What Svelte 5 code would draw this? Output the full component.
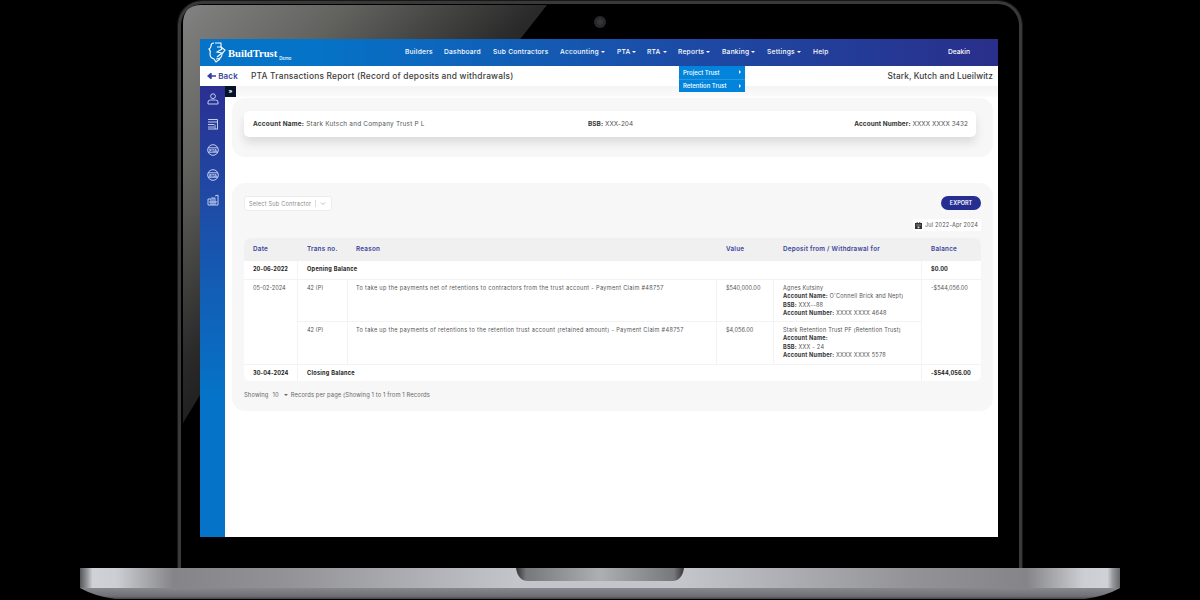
<script lang="ts">
	const nav = [
		{ label: 'Builders' },
		{ label: 'Dashboard' },
		{ label: 'Sub Contractors' },
		{ label: 'Accounting', menu: true },
		{ label: 'PTA', menu: true },
		{ label: 'RTA', menu: true },
		{ label: 'Reports', menu: true, items: ['Project Trust', 'Retention Trust'] },
		{ label: 'Banking', menu: true },
		{ label: 'Settings', menu: true },
		{ label: 'Help' }
	]

	const rows = [
		{
			trans: '42 (P)',
			reason:
				'To take up the payments net of retentions to contractors from the trust account - Payment Claim #48757',
			value: '$540,000.00',
			name: 'Agnes Kutsiny',
			account: "O'Connell Brick and Nept)",
			bsb: 'XXX--88',
			number: 'XXXX XXXX 4648'
		},
		{
			trans: '42 (P)',
			reason:
				'To take up the payments of retentions to the retention trust account (retained amount) - Payment Claim #48757',
			value: '$4,056.00',
			name: 'Stark Retention Trust PF (Retention Trust)',
			account: '',
			bsb: 'XXX - 24',
			number: 'XXXX XXXX 5578'
		}
	]
</script>

<div class="laptop">
	<div class="lid">
		<svg class="glare" viewBox="0 0 846 568">
			<defs>
				<linearGradient id="glare" x1="0" y1="0" x2="0.65" y2="0.75">
					<stop offset="0" stop-color="#828282" />
					<stop offset="0.3" stop-color="#62625f" />
					<stop offset="0.65" stop-color="#2a2a2a" />
					<stop offset="1" stop-color="#0c0c0c" />
				</linearGradient>
			</defs>
			<path d="M6 24 Q6 5 24 5 H370 L344 38 L23 395 L6 423 Z" fill="url(#glare)" />
			<circle cx="423" cy="22" r="6" fill="#29292b" />
			<circle cx="423" cy="22" r="3" fill="#353538" />
		</svg>

		<div class="screen">
			<header class="topbar">
				<div class="brand">
					<svg class="shield" viewBox="0 0 18 22">
						<path d="M6 1 Q3 1 3 4 Q3 6 1 7 Q3 9 2 12 Q2 16 6 17 L8 20 L12 17" />
						<path d="M7 1 H13 V5 L17 8 L14 12 Q14 17 8 17" />
						<path d="M9 5 L13 5 L14 7 L9 10 L14 11 L9 15" />
					</svg>
					<span class="name">BuildTrust</span>
					<span class="demo">Demo</span>
				</div>
				<nav>
					{#each nav as item}
						<div class="item">
							{item.label}{#if item.menu}<i class="caret"></i>{/if}
							{#if item.items}
								<div class="dropdown">
									{#each item.items as sub}
										<div><span>{sub}</span><i class="side"></i></div>
									{/each}
								</div>
							{/if}
						</div>
					{/each}
				</nav>
				<span class="user">Deakin</span>
			</header>

			<div class="titlebar">
				<span class="back">
					<svg viewBox="0 0 9 6"><path d="M9 3 H3 M4 0.5 L1 3 L4 5.5 Z" /></svg>
					Back
				</span>
				<h1>PTA Transactions Report (Record of deposits and withdrawals)</h1>
				<span class="company">Stark, Kutch and Lueilwitz</span>
			</div>

			<div class="body">
				<aside>
					<svg viewBox="0 0 12 12">
						<circle cx="6" cy="3.2" r="2.4" />
						<path d="M1 11 V9 Q1 7 3.5 7 H8.5 Q11 7 11 9 V11 Z" />
					</svg>
					<svg viewBox="0 0 12 12">
						<path d="M1 1.5 H10.5 V11 M1 4 H10 M1 6.5 H7 M1 9 H7 M1 11 H11 M8 6.5 V11" />
					</svg>
					<svg viewBox="0 0 12 12">
						<circle cx="6" cy="6" r="5.3" />
						<path d="M1 3.8 H11 M1 8.2 H11" />
						<text x="6" y="7.6">PTA</text>
					</svg>
					<svg viewBox="0 0 12 12">
						<circle cx="6" cy="6" r="5.3" />
						<path d="M1 3.8 H11 M1 8.2 H11" />
						<text x="6" y="7.6">RTA</text>
					</svg>
					<svg viewBox="0 0 12 12">
						<path d="M1 11 V5 H4 V11 M4 4 H8 V11 M8 2 L11 1 V11 M1 11 H11 M2 8 H10 M6 4 V11" />
					</svg>
					<b class="toggle">»</b>
				</aside>

				<main>
					<section class="account">
						<div class="summary">
							<span class="holder"><b>Account Name:</b> Stark Kutsch and Company Trust P L</span>
							<span><b>BSB:</b> XXX-204</span>
							<span><b>Account Number:</b> XXXX XXXX 3432</span>
						</div>
					</section>

					<section class="report">
						<div class="tools">
							<div class="select">
								<span>Select Sub Contractor</span>
								<svg viewBox="0 0 6 4"><path d="M1 1 L3 3 L5 1" /></svg>
							</div>
							<button>EXPORT</button>
						</div>
						<div class="period">
							<div class="date">
								<svg viewBox="0 0 8 8">
									<path d="M2 0 H3 V1 H5 V0 H6 V1 H8 V8 H0 V1 H2 Z" />
									<path class="hole" d="M1.2 3 H6.8 V3.6 H1.2 Z M3 5 H5 V7 H3 Z" />
								</svg>
								Jul 2022-Apr 2024
							</div>
						</div>

						<div class="table">
							<div class="row head">
								<span>Date</span>
								<span>Trans no.</span>
								<span class="reason">Reason</span>
								<span>Value</span>
								<span>Deposit from / Withdrawal for</span>
								<span>Balance</span>
							</div>
							<div class="row total">
								<span>20-06-2022</span>
								<span class="wide">Opening Balance</span>
								<span>$0.00</span>
							</div>
							{#each rows as row, i}
								<div class="row entry" class:first={i === 0}>
									<span>{i === 0 ? '05-02-2024' : ''}</span>
									<span>{row.trans}</span>
									<span class="reason">{row.reason}</span>
									<span>{row.value}</span>
									<div class="party">
										<p>{row.name}</p>
										<p><b>Account Name:</b> {row.account}</p>
										<p><b>BSB:</b> {row.bsb}</p>
										<p><b>Account Number:</b> {row.number}</p>
									</div>
									<span>{i === 0 ? '-$544,056.00' : ''}</span>
								</div>
							{/each}
							<div class="row total closing">
								<span>30-04-2024</span>
								<span class="wide">Closing Balance</span>
								<span>-$544,056.00</span>
							</div>
						</div>

						<footer>
							<span>Showing</span><span class="count">10</span><i class="caret"></i>
							<span>Records per page (Showing 1 to 1 from 1 Records</span>
						</footer>
					</section>
				</main>
			</div>
		</div>
	</div>

	<svg class="base" viewBox="0 0 1040 32">
		<defs>
			<linearGradient id="metal">
				<stop offset="0" stop-color="#55565a" />
				<stop offset="0.007" stop-color="#97989c" />
				<stop offset="0.012" stop-color="#d0d1d6" />
				<stop offset="0.035" stop-color="#cdced3" />
				<stop offset="0.09" stop-color="#858589" />
				<stop offset="0.2" stop-color="#929297" />
				<stop offset="0.42" stop-color="#c4c5ca" />
				<stop offset="0.58" stop-color="#c4c5ca" />
				<stop offset="0.8" stop-color="#929297" />
				<stop offset="0.91" stop-color="#858589" />
				<stop offset="0.965" stop-color="#cdced3" />
				<stop offset="0.988" stop-color="#d0d1d6" />
				<stop offset="0.993" stop-color="#97989c" />
				<stop offset="1" stop-color="#66676b" />
			</linearGradient>
			<linearGradient id="under" x2="0" y2="1">
				<stop offset="0" stop-color="#87888d" />
				<stop offset="0.75" stop-color="#6f7075" />
				<stop offset="1" stop-color="#434348" />
			</linearGradient>
			<linearGradient id="notch">
				<stop offset="0" stop-color="#333" />
				<stop offset="0.06" stop-color="#77787b" />
				<stop offset="0.5" stop-color="#aeafb3" />
				<stop offset="0.94" stop-color="#77787b" />
				<stop offset="1" stop-color="#333" />
			</linearGradient>
		</defs>
		<path d="M0 20 H1040 Q1026 28 1005 31 H35 Q14 28 0 20 Z" fill="url(#under)" />
		<rect width="1040" height="20" fill="url(#metal)" />
		<path d="M436 0 H604 Q602 13 592 13 H448 Q438 13 436 0 Z" fill="url(#notch)" />
	</svg>
</div>

<style>
	:global(body) {
		background: #000;
	}

	.laptop {
		height: 600px;
		overflow: hidden;
		font-family: Inter, 'Open Sans', sans-serif;
		font-size: 5.6px;
		color: #555;
		white-space: nowrap;
	}

	.lid {
		position: relative;
		box-sizing: border-box;
		width: 844px;
		height: 567px;
		margin: 1px 0 0 178px;
		padding: 35px 0 0 19px;
		border: 3px solid #393939;
		border-bottom: 0;
		border-radius: 24px 24px 0 0;
		box-shadow: 0 0 0 1px #181818;
	}

	.glare {
		position: absolute;
		top: -4px;
		left: -4px;
		width: 846px;
		height: 568px;
	}

	.screen {
		position: relative;
		display: flex;
		flex-direction: column;
		width: 798px;
		height: 498px;
		background: #fff;
	}

	.topbar {
		display: flex;
		align-items: center;
		height: 27px;
		color: #fff;
		background: linear-gradient(90deg, #0573c7 15%, #1c4ba6 60%, #292f8b);
		font-size: 6.7px;
		font-weight: 500;
	}

	.brand {
		display: flex;
		align-items: center;
		width: 197px;
		padding-left: 8px;
	}

	.shield {
		width: 18px;
		height: 22px;
		fill: none;
		stroke: #fff;
		stroke-width: 1.1;
	}

	.name {
		margin: 2px 0 0 2px;
		font: bold 10.6px 'Liberation Serif', serif;
	}

	.demo {
		margin: 12px 0 0 2px;
		font-size: 4.3px;
	}

	nav {
		display: grid;
		grid-template-columns: 39px 49px 67px 57px 30px 31px 44px 45px 46px 135px;
		margin-bottom: 2px;
		letter-spacing: 0.22px;
	}

	.user {
		margin-bottom: 1px;
	}

	.item {
		position: relative;
	}

	.caret {
		display: inline-block;
		margin: 0 0 1px 2px;
		border: 2px solid transparent;
		border-top: 2.5px solid;
		border-bottom: 0;
	}

	.dropdown {
		position: absolute;
		z-index: 1;
		top: 18px;
		left: 1px;
		width: 66px;
		height: 26px;
		background: #0384dc;
		font-size: 6px;
		letter-spacing: 0;
	}

	.dropdown div {
		display: flex;
		justify-content: space-between;
		align-items: center;
		height: 13px;
		padding: 0 4px;
	}

	.dropdown div + div {
		border-top: 1px solid #2997e2;
		height: 12px;
	}

	.side {
		border: 2px solid transparent;
		border-left: 2px solid;
		border-right: 0;
	}

	.titlebar {
		display: flex;
		align-items: center;
		height: 20px;
		padding: 0 5px 0 7px;
		font-size: 8px;
		color: #3c3c3c;
	}

	.back {
		width: 44px;
		color: #3a46a0;
		font-weight: 600;
		letter-spacing: 0.15px;
	}

	.back svg {
		width: 9px;
		height: 6px;
		fill: #3340a0;
		stroke: #3340a0;
		stroke-width: 1.4;
	}

	h1 {
		margin: 0;
		font-size: 8.4px;
		font-weight: 500;
		letter-spacing: 0.2px;
	}

	.company {
		margin-left: auto;
		font-size: 8.3px;
		font-weight: 500;
		letter-spacing: 0.1px;
	}

	.body {
		display: flex;
		height: 451px;
	}

	aside {
		position: relative;
		display: flex;
		flex-direction: column;
		align-items: center;
		gap: 13.3px;
		box-sizing: border-box;
		width: 25px;
		padding-top: 7px;
		background: linear-gradient(#2b2f92, #1c4fa9 30%, #0573c7 68%);
	}

	aside svg {
		width: 12px;
		height: 12px;
		fill: none;
		stroke: #c3cdf0;
	}

	aside text {
		fill: #c3cdf0;
		stroke: none;
		font-size: 4px;
		font-weight: bold;
		text-anchor: middle;
	}

	.toggle {
		position: absolute;
		top: 0;
		left: 25px;
		width: 11px;
		height: 11px;
		background: #04122a;
		color: #fff;
		font-size: 6px;
		line-height: 10px;
		text-align: center;
	}

	main {
		width: 761px;
		padding: 12px 5px 0 7px;
		background: linear-gradient(#f4f4f4, #fafafa 10px, #fff 12px) 7px 0 no-repeat;
	}

	section {
		box-sizing: border-box;
		border-radius: 13px;
		background: #f7f7f7;
	}

	.account {
		height: 59px;
		padding: 13px 17px 0 12px;
	}

	.summary {
		display: grid;
		grid-template-columns: 335px 1fr auto;
		align-items: center;
		height: 26px;
		padding: 0 8px 0 9px;
		border-radius: 5px;
		background: #fff;
		box-shadow: 0 6px 10px #0000001c;
		font-size: 6.4px;
		letter-spacing: 0.08px;
	}

	.holder {
		letter-spacing: 0.23px;
	}

	b {
		color: #333;
	}

	.report {
		height: 228px;
		margin-top: 26px;
		padding: 13px 12px 0;
	}

	.tools,
	.period {
		display: flex;
		justify-content: space-between;
	}

	.select {
		display: flex;
		align-items: center;
		justify-content: space-between;
		box-sizing: border-box;
		width: 88px;
		height: 15px;
		padding: 0 5px 0 4px;
		border: 1px solid #ededed;
		border-radius: 3px;
		background: #fff;
		color: #8b8b8b;
		letter-spacing: 0.2px;
	}

	.select svg {
		width: 6px;
		height: 7px;
		padding-left: 4px;
		border-left: 1px solid #ddd;
		fill: none;
		stroke: #bbb;
	}

	button {
		width: 40px;
		height: 14px;
		padding: 0;
		border: 0;
		border-radius: 7px;
		background: #262f91;
		color: #fff;
		font: 600 5.5px Inter, sans-serif;
	}

	.period {
		justify-content: flex-end;
		margin-top: 8px;
	}

	.date {
		display: flex;
		align-items: center;
		justify-content: space-between;
		box-sizing: border-box;
		width: 68px;
		height: 12px;
		padding: 0 3px 0 2px;
		background: #fff;
		letter-spacing: 0.15px;
	}

	.date svg {
		width: 7px;
		height: 7px;
		fill: #333;
	}

	.date .hole {
		fill: #ddd;
	}

	.table {
		margin-top: 7px;
		border-radius: 6px;
		overflow: hidden;
		background: #fff;
	}

	.row {
		display: grid;
		grid-template-columns: 54px 50px 369px 57px 148px 59px;
		box-sizing: border-box;
	}

	.row > * {
		box-sizing: border-box;
		padding-left: 9px;
		border-right: 1px solid #f3f3f3;
	}

	.row > :last-child {
		border-right: 0;
	}

	.row > .reason {
		padding-left: 8px;
	}

	.head {
		height: 23px;
		background: #f0f0f0;
		color: #39429a;
		font-size: 6.3px;
		font-weight: 600;
		letter-spacing: 0.25px;
		line-height: 22px;
	}

	.head > * {
		border-color: #f0f0f0;
	}

	.total {
		height: 18px;
		color: #222;
		font-weight: 700;
		letter-spacing: 0.08px;
		line-height: 17px;
	}

	.wide {
		grid-column: 2 / 6;
		letter-spacing: 0.27px;
	}

	.entry {
		height: 43px;
		line-height: 8.3px;
	}

	.entry.first {
		height: 42px;
		border-top: 1px solid #f3f3f3;
	}

	.entry > * {
		padding-top: 4px;
	}

	.entry .reason {
		letter-spacing: 0.31px;
	}

	.party {
		letter-spacing: 0.2px;
	}

	.entry:not(.first) > :not(:first-child):not(:last-child),
	.closing {
		border-top: 1px solid #f3f3f3;
	}

	.closing {
		height: 17px;
	}

	p {
		margin: 0;
	}

	footer {
		display: flex;
		align-items: center;
		margin-top: 10px;
		font-size: 5.8px;
		letter-spacing: 0.12px;
		color: #666;
	}

	.count {
		margin-left: 4px;
	}

	footer .caret {
		margin: 0 3px 0 5px;
	}

	.base {
		position: relative;
		display: block;
		width: 1040px;
		height: 32px;
		margin-left: 80px;
	}
</style>
